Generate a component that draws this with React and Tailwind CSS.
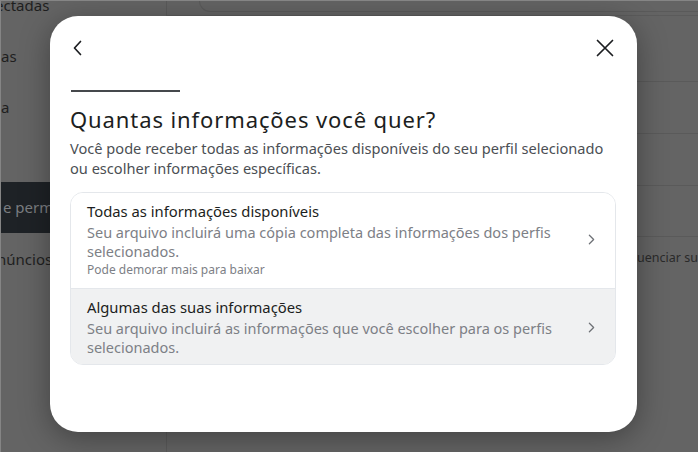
import { ChevronRight } from "lucide-react";

const font = { fontFamily: '"Noto Sans", "Open Sans", sans-serif' };

function Option({ title, desc, note, shaded }) {
  return (
    <button
      className={`w-full flex items-center text-left pl-4 pr-[15px] ${
        shaded ? "bg-[#f0f1f2] pt-[8px] pb-[7px] border-t border-[#e4e7eb]" : "bg-white pt-[8px] pb-[10px]"
      }`}
    >
      <div className="flex-1">
        <div className="text-[14.8px] leading-[20px] text-[#1c1e21]">{title}</div>
        <div className="text-[14.5px] leading-[19px] text-[#7d8086] mt-[2px] pr-6">{desc}</div>
        {note && <div className="text-[12px] leading-[16px] text-[#7d8086] mt-[1px]">{note}</div>}
      </div>
      <ChevronRight className="w-[17px] h-[17px] text-[#6f7277]" strokeWidth={1.8} />
    </button>
  );
}

export default function App() {
  return (
    <div className="relative w-[698px] h-[452px] overflow-hidden bg-[#646464] border-t border-l border-[#858585]" style={font}>
      {/* page behind the dialog */}
      <div className="flex h-full">
        <aside className="w-[166px] shrink-0 border-r border-[#5a5a5a] text-[15px] text-[#1f1f1f] -mt-[21px]">
          <div className="h-[51px] flex items-center -ml-[6px]">ectadas</div>
          <div className="h-[51px] flex items-center">as</div>
          <div className="h-[51px] flex items-center">a</div>
          <div className="h-[49px]" />
          <div className="h-[51px] bg-[#1e2226] flex items-center text-[#7a7d80] pl-[2px]">e permissões</div>
          <div className="h-[52px] flex items-center -ml-[4px]">núncios</div>
        </aside>
        <main className="flex-1 min-w-0">
          <div className="ml-[32px] h-[11px] border-l border-b border-[#5a5a5a] rounded-bl-[12px]" />
          <div className="h-[4px] border-b border-[#5b5b5b]" />
          <div className="mt-[14px]">
            <div className="h-[52px] border-b border-[#5a5a5a]" />
            <div className="h-[52px] border-b border-[#5a5a5a]" />
            <div className="h-[52px] border-b border-[#5a5a5a]" />
            <div className="h-[51px] border-b border-[#5a5a5a]" />
          </div>
          <div className="flex items-center h-[42px] text-[12.5px] text-[#2a2a2a] whitespace-nowrap">
            <div className="w-[470px] shrink-0" />
            <span>uenciar sua</span>
          </div>
        </main>
      </div>

      {/* dialog */}
      <div className="absolute left-[49px] top-[15px] w-[587px] h-[416px] bg-white rounded-[28px] shadow-[0_6px_30px_rgba(0,0,0,0.35)] px-5 pt-[20px]">
        <div className="flex items-center justify-between h-[24px]">
          <svg width="24" height="24" viewBox="0 0 24 24" className="-ml-[2px]">
            <path d="M12.5 5.5 L6.5 12 L12.5 18.5" fill="none" stroke="#1c1e21" strokeWidth="1.7" strokeLinecap="round" strokeLinejoin="round" />
          </svg>
          <svg width="24" height="24" viewBox="0 0 24 24">
            <path d="M4.5 4.5 L19.5 19.5 M19.5 4.5 L4.5 19.5" fill="none" stroke="#1c1e21" strokeWidth="1.7" strokeLinecap="round" />
          </svg>
        </div>
        <div className="mt-[30px] w-[109px] h-[2px] bg-[#45484c] ml-px" />
        <h1 className="mt-[12px] text-[22px] leading-[30px] tracking-[0.9px] text-[#1c1e21]">Quantas informações você quer?</h1>
        <p className="mt-[4px] text-[14.6px] leading-[20px] text-[#4b4f54]">
          Você pode receber todas as informações disponíveis do seu perfil selecionado ou escolher informações específicas.
        </p>
        <div className="mt-[14px] w-[546px] rounded-[13px] border border-[#e4e7eb] overflow-hidden">
          <Option
            title="Todas as informações disponíveis"
            desc="Seu arquivo incluirá uma cópia completa das informações dos perfis selecionados."
            note="Pode demorar mais para baixar"
          />
          <Option
            shaded
            title="Algumas das suas informações"
            desc="Seu arquivo incluirá as informações que você escolher para os perfis selecionados."
          />
        </div>
      </div>
    </div>
  );
}
